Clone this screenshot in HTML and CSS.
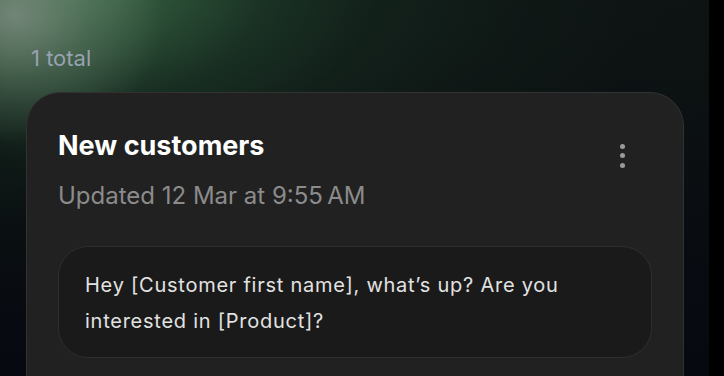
FILE: index.html
```html
<!DOCTYPE html>
<html>
<head>
<meta charset="utf-8">
<link rel="stylesheet" href="styles.css">
</head>
<body>
<div class="page">
  <main class="main">
    <div class="count">1 total</div>
    <section class="card">
      <div class="card-head">
        <div class="titles">
          <h2 class="title">New customers</h2>
          <div class="updated">Updated 12 Mar at 9:55&#8239;AM</div>
        </div>
        <button class="kebab" aria-label="More">
          <span class="dot"></span><span class="dot"></span><span class="dot"></span>
        </button>
      </div>
      <div class="message">Hey [Customer first name], what’s up? Are you interested in [Product]?</div>
    </section>
  </main>
  <div class="gutter"></div>
</div>
</body>
</html>
```
FILE: styles.css
```css
html, body {
  margin: 0;
  padding: 0;
  height: 376px;
  overflow: hidden;
  background: #000;
  font-family: Inter, "Noto Sans", sans-serif;
}
.page {
  display: flex;
  height: 376px;
  overflow: hidden;
}
.main {
  flex: 1;
  padding: 45px 25px 0 26px;
  background:
    radial-gradient(ellipse 150px 130px at 15px 15px, rgba(125,140,128,0.85), rgba(110,135,115,0.4) 50%, rgba(100,130,110,0) 100%),
    radial-gradient(ellipse 420px 250px at 60px -20px, rgba(70,120,82,0.95) 0%, rgba(52,95,64,0.75) 25%, rgba(30,60,42,0.55) 50%, rgba(20,40,30,0.25) 75%, rgba(15,30,22,0) 100%),
    radial-gradient(ellipse 700px 330px at 200px 0px, rgba(22,40,30,0.9), rgba(14,24,20,0.5) 60%, rgba(10,15,18,0) 100%),
    linear-gradient(180deg, #0d1013 0%, #0a0d11 40%, #060910 100%);
}
.gutter {
  width: 15px;
  background: #000;
}
.count {
  padding-left: 5px;
  color: #97a2b0;
  font-size: 22px;
  line-height: 26px;
  margin-bottom: 21px;
}
.card {
  background: #212121;
  border: 1px solid #323232;
  border-radius: 34px;
  padding: 37px 31px 40px;
  height: 400px;
  box-sizing: border-box;
}
.card-head {
  display: flex;
  justify-content: space-between;
  align-items: flex-start;
}
.title {
  margin: 0;
  color: #fff;
  font-size: 27px;
  font-weight: 700;
  line-height: 32px;
}
.updated {
  margin-top: 20px;
  color: #8b8b8b;
  font-size: 24px;
  line-height: 28px;
}
.kebab {
  background: none;
  border: 0;
  padding: 0;
  margin: 14px 26px 0 0;
  width: 8px;
  display: flex;
  flex-direction: column;
  align-items: center;
  gap: 4.3px;
}
.dot {
  width: 5px;
  height: 5px;
  border-radius: 50%;
  background: #9a9a9a;
}
.message {
  margin-top: 36px;
  background: #1a1a1a;
  border: 1px solid #2e2e2e;
  border-radius: 30px;
  padding: 20px 26px 18px;
  color: #e2e2e2;
  font-size: 20px;
  line-height: 36px;
  letter-spacing: 0.75px;
}
```
